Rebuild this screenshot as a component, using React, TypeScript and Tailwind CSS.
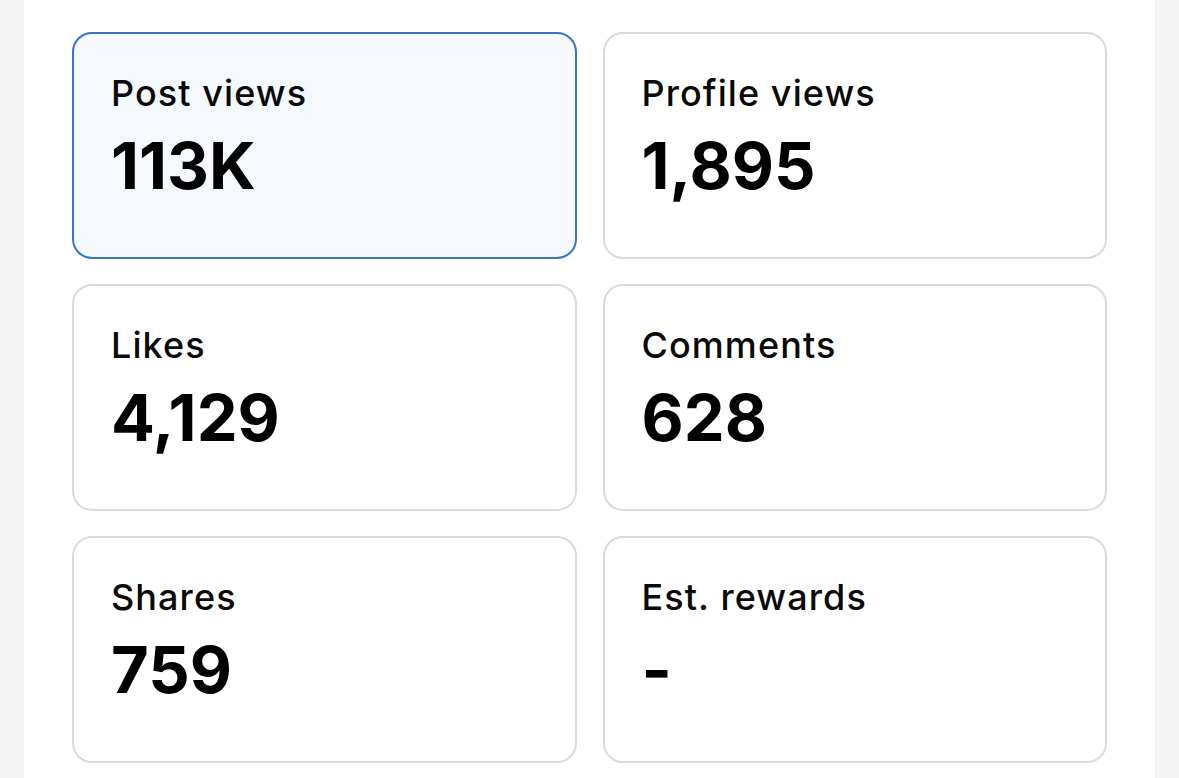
import React from "react";

const items = [
  { label: "Post views", value: "113K", active: true },
  { label: "Profile views", value: "1,895" },
  { label: "Likes", value: "4,129" },
  { label: "Comments", value: "628" },
  { label: "Shares", value: "759" },
  { label: "Est. rewards", value: "-" },
];

export default function App() {
  return (
    <div className="w-full h-[778px] bg-[#f4f4f4] overflow-hidden" style={{ fontFamily: "Inter, 'Liberation Sans', sans-serif" }}>
      <div className="mx-[24px] h-full bg-white pl-[48px] pr-[48px] pt-[32px]">
        <div className="grid grid-cols-2 gap-x-[26px] gap-y-[25px]">
          {items.map((it) => (
            <div
              key={it.label}
              className={
                it.active
                  ? "h-[227px] rounded-[20px] border-2 border-[#3b75c2] bg-[#f5f8fd] pl-[37px] pt-[39px]"
                  : "h-[227px] rounded-[20px] border-2 border-[#dadada] bg-white pl-[37px] pt-[39px]"
              }
            >
              <div className="text-[36px] leading-[40px] tracking-[0.03em] text-[#0a0a0a] font-[450]">{it.label}</div>
              <div className="mt-[18px] text-[65px] leading-[70px] font-bold text-black">{it.value}</div>
            </div>
          ))}
        </div>
      </div>
    </div>
  );
}
